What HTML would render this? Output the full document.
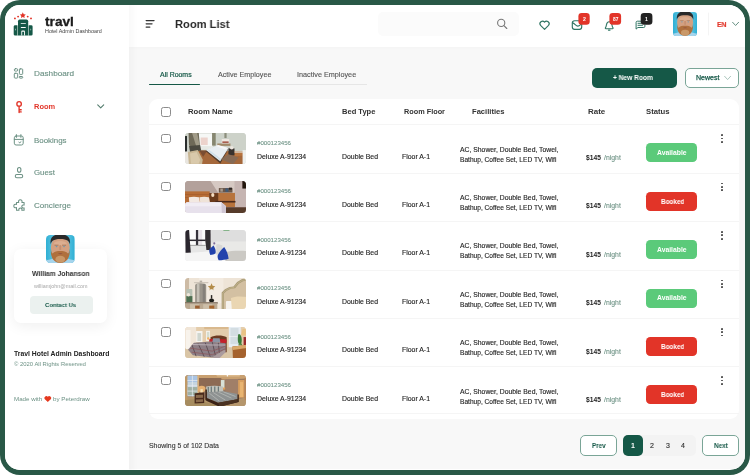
<!DOCTYPE html>
<html lang="en">
<head>
<meta charset="utf-8">
<title>travl - Room List</title>
<style>
*{box-sizing:border-box;margin:0;padding:0}
html,body{width:750px;height:475px;overflow:hidden;background:#fff}
body{font-family:"Liberation Sans",sans-serif;position:relative}
.abs{position:absolute}
.t{position:absolute;white-space:nowrap;font-family:"Liberation Sans",sans-serif;transform-origin:0 50%;will-change:transform}
#frame{position:absolute;left:0;top:0;width:750px;height:475px;border-radius:20px 21.5px 20px 20px;background:#295847}
#page{position:absolute;left:5px;top:4.5px;width:740px;height:465.5px;border-radius:15px 17px 15px 15px;background:#fff;overflow:hidden}
/* coordinates inside #page are offset; use #abs layer in page coords instead */
#layer{position:absolute;left:-5px;top:-4.5px;width:750px;height:475px}
#content{position:absolute;left:129px;top:0;width:621px;height:468.6px;background:#f8f8f8}
#sidebar{position:absolute;left:0;top:0;width:129px;height:475px;background:#fff;box-shadow:3px 0 8px rgba(0,0,0,.035)}
#header{position:absolute;left:129px;top:0;width:621px;height:47.2px;background:#fff;box-shadow:0 1px 4px rgba(0,0,0,.025)}
#search{position:absolute;left:378.1px;top:12.4px;width:140.6px;height:23.3px;border-radius:5px;background:#fbfbfb}
.card{position:absolute;background:#fff;border-radius:8px}
#table{left:149px;top:99.2px;width:590px;height:319.8px;border-radius:9px}
.hr{position:absolute;left:149px;width:590px;height:1px;background:#f5f5f5}
.cb{position:absolute;left:161px;width:9.6px;height:9.4px;border:1.1px solid #8c8c8c;border-radius:2.4px;background:#fff}
.ph{position:absolute;left:185.2px;width:60.6px;height:31.2px;border-radius:3.5px;overflow:hidden}
.ph svg{display:block;width:100%;height:100%}
.st{position:absolute;left:646.2px;width:50.4px;height:19px;border-radius:4.3px}
.st.a{background:#5bca7a}.st.b{background:#e23428}
.dots{position:absolute;left:721.3px;width:1.8px;height:9px}
.dots i{position:absolute;left:0;width:1.75px;height:1.75px;border-radius:50%;background:#4a4a4a}
.btn{position:absolute;border-radius:4px}
.pgb{position:absolute;top:435.3px;height:21.2px;border-radius:5px;border:1px solid #7aa597;background:#fff}
</style>
</head>
<body>
<div id="frame"></div>
<div id="page"><div id="layer">
  <main id="content"></main>
  <header id="header"></header>
  <aside id="sidebar"></aside>
  <div id="search"></div>

  <!-- profile card -->
  <div class="card" style="left:13.9px;top:248.5px;width:92.9px;height:74.5px;border-radius:7px;box-shadow:0 3px 14px rgba(0,0,0,.065)"></div>
  <div class="abs" style="left:29.7px;top:295.6px;width:63.2px;height:18.4px;border-radius:4px;background:#ebf1ef"></div>
  <div class="abs" style="left:46.1px;top:235.2px;width:28.6px;height:28.2px;border-radius:4.2px;overflow:hidden"><svg viewBox="0 0 100 100" preserveAspectRatio="none" width="100%" height="100%"><defs><linearGradient id="avbga" x1="0" x2="1" y1="0" y2="0"><stop offset="0" stop-color="#2eafd4"/><stop offset=".5" stop-color="#86d5ea"/><stop offset="1" stop-color="#2eafd4"/></linearGradient><filter id="avbla" x="-10%" y="-10%" width="120%" height="120%"><feGaussianBlur stdDeviation="2.600"/></filter></defs><rect width="100" height="100" fill="url(#avbga)"/><g filter="url(#avbla)"><path d="M-5 106V92C8 88 20 86 32 82h36c12 4 24 6 37 10v14z" fill="#a5d4ec"/><ellipse cx="50" cy="44" rx="33" ry="41" fill="#d3a081"/><ellipse cx="50" cy="30" rx="22" ry="9" fill="#dcae90"/><path d="M16 33C13 6 28-3 50-3s37 9 34 36c-3-11-9-19-34-19S19 22 16 33z" fill="#2a2a2c"/><path d="M17 50c1 9 3 14 6 16 6-8 16-9 27-9s21 1 27 9c3-2 5-7 6-16 2 26-8 49-33 49S15 76 17 50z" fill="#b0703e"/><ellipse cx="50" cy="86" rx="17" ry="12" fill="#c99868"/><ellipse cx="50" cy="66" rx="7.500" ry="2.200" fill="#965641"/><path d="M30 35h14v2.500H30zM56 35h14v2.500H56z" fill="#9a6a4c"/><circle cx="37" cy="41" r="2.800" fill="#6a9ab5"/><circle cx="63" cy="41" r="2.800" fill="#6a9ab5"/><path d="M47 36v17h6V36z" fill="#c58e6e"/></g></svg></div>
  <div class="abs" style="left:673.3px;top:11.9px;width:24.2px;height:24.0px;border-radius:3.2px;overflow:hidden"><svg viewBox="0 0 100 100" preserveAspectRatio="none" width="100%" height="100%"><defs><linearGradient id="avbgb" x1="0" x2="1" y1="0" y2="0"><stop offset="0" stop-color="#2eafd4"/><stop offset=".5" stop-color="#86d5ea"/><stop offset="1" stop-color="#2eafd4"/></linearGradient><filter id="avblb" x="-10%" y="-10%" width="120%" height="120%"><feGaussianBlur stdDeviation="2.600"/></filter></defs><rect width="100" height="100" fill="url(#avbgb)"/><g filter="url(#avblb)"><path d="M-5 106V92C8 88 20 86 32 82h36c12 4 24 6 37 10v14z" fill="#a5d4ec"/><ellipse cx="50" cy="44" rx="33" ry="41" fill="#d3a081"/><ellipse cx="50" cy="30" rx="22" ry="9" fill="#dcae90"/><path d="M16 33C13 6 28-3 50-3s37 9 34 36c-3-11-9-19-34-19S19 22 16 33z" fill="#2a2a2c"/><path d="M17 50c1 9 3 14 6 16 6-8 16-9 27-9s21 1 27 9c3-2 5-7 6-16 2 26-8 49-33 49S15 76 17 50z" fill="#b0703e"/><ellipse cx="50" cy="86" rx="17" ry="12" fill="#c99868"/><ellipse cx="50" cy="66" rx="7.500" ry="2.200" fill="#965641"/><path d="M30 35h14v2.500H30zM56 35h14v2.500H56z" fill="#9a6a4c"/><circle cx="37" cy="41" r="2.800" fill="#6a9ab5"/><circle cx="63" cy="41" r="2.800" fill="#6a9ab5"/><path d="M47 36v17h6V36z" fill="#c58e6e"/></g></svg></div>

  <!-- tabs -->
  <div class="abs" style="left:149px;top:84px;width:217.5px;height:1px;background:#e6e6e6"></div>
  <div class="abs" style="left:149px;top:83.6px;width:50.8px;height:1.5px;background:#155847;border-radius:1px"></div>

  <!-- buttons -->
  <div class="btn" style="left:592.3px;top:68.1px;width:85px;height:19.8px;background:#155847;border-radius:5px"></div>
  <div class="btn" style="left:685.3px;top:68.1px;width:53.7px;height:19.8px;background:#fff;border:1px solid #7aa597;border-radius:5px"></div>

  <!-- table -->
  <div class="card" id="table"></div>
  <div class="cb" style="top:107.2px"></div>
  <div class="hr" style="top:124.2px"></div>
  <div class="cb" style="top:133.7px"></div>
  <div class="ph" style="top:133.0px"><svg viewBox="0 0 60 31" preserveAspectRatio="none"><defs><filter id="pf0" x="-5%" y="-5%" width="110%" height="110%"><feGaussianBlur stdDeviation="0.75"/></filter></defs><rect width="60" height="31" fill="#cdd2c9"/><g filter="url(#pf0)"><rect x="-2" y="-2" width="64" height="35" fill="#cdd2c9"/><path d="M14 17.500L60 18.300V33H-2V20z" fill="#a5673a"/><path d="M14 17.500l8 0-4 6z" fill="#7a4e30"/><path d="M42 18l15 .5v4l-8 .5z" fill="#b8743f"/><rect x="13.800" y=".500" width="13.500" height="15.500" fill="#f6f8f6"/><rect x="15.500" y="4.500" width="7" height="7.500" fill="#ecd3cc"/><rect x="14" y="13" width="13" height="3.500" fill="#e6e9e4"/><path d="M3.500 -1h10l1.300 13.500-4.300 3-6.500-3z" fill="#6e6958"/><path d="M7 0l5 0 2.500 12.500-3 2z" fill="#a19b88"/><path d="M4 13l11 -1 1 5.500-11 1.500z" fill="#4b4a40"/><rect x="26.800" y="-1" width="3.600" height="13.500" fill="#86866f"/><rect x="39" y="-1" width="2.200" height="6" fill="#8c8e7c"/><rect x="-1" y="3" width="3" height="15.500" fill="#2c2d2d"/><path d="M2.800 19l9.800-2.200 5 9.700-1 6H2.500z" fill="#c9b795"/><path d="M5 20.500l6.500-1.500 3.500 7.500-1.500 4H6z" fill="#d9c9ab"/><path d="M-1 19l3.800-.500L4 33H-1z" fill="#e9e6e0"/><rect x="32" y="10.400" width="13" height="2.400" fill="#a18a6a"/><rect x="36.400" y="6" width="7.400" height="4.400" fill="#efe7e0"/><rect x="37" y="8.300" width="6.200" height="1.800" fill="#a85e50"/><path d="M20.400 18L32 12.600l11 3-8 14.600z" fill="#4e3a2c"/><path d="M20.800 17L32 12.200l11 2.900-8.200 13z" fill="#e8eef2"/><path d="M22.500 17.600l12.500 9.800 1-1.600-12-9z" fill="#cfe0ea"/><path d="M30.500 13l2.500-1 9 2.600-1.500 2z" fill="#f7f7f7"/><rect x="43" y="15.300" width="6" height="7" fill="#39312e"/><ellipse cx="46.300" cy="14.700" rx="1.800" ry="1.700" fill="#ece6de"/><path d="M35.500 26l7.500-4.800 10 3.200-5.500 6.600z" fill="#866b55"/><rect x="57" y="17" width="4" height="16" fill="#eef0ee"/><rect x="49" y="18.300" width="8.500" height="1.200" fill="#e3e0d8"/></g></svg></div>
  <div class="st a" style="top:143.4px"></div>
  <div class="dots" style="top:133.8px"><i style="top:.55px"></i><i style="top:3.9px"></i><i style="top:7.25px"></i></div>
  <div class="hr" style="top:172.8px"></div>
  <div class="cb" style="top:182.1px"></div>
  <div class="ph" style="top:181.4px"><svg viewBox="0 0 60 31" preserveAspectRatio="none"><defs><filter id="pf1" x="-5%" y="-5%" width="110%" height="110%"><feGaussianBlur stdDeviation="0.75"/></filter></defs><rect width="60" height="31" fill="#b3a19b"/><g filter="url(#pf1)"><rect x="-2" y="-2" width="64" height="35" fill="#b3a19b"/><path d="M24 -2h38v14H33z" fill="#d6c9c3"/><rect x="49" y="-2" width="13" height="32" fill="#c6b5b2"/><rect x="-2" y="10.300" width="26.500" height="12" fill="#b66c34"/><rect x="-2" y="13" width="26" height=".5" fill="#9c5626"/><rect x="-2" y="16" width="26" height=".5" fill="#9c5626"/><rect x="24" y="12" width="9.500" height="9" fill="#6b3a1f"/><rect x="33" y="11.800" width="16.500" height="14" fill="#b7733e"/><rect x="30" y="19.800" width="20" height="1.600" fill="#4c2c1c"/><rect x="33.500" y="7" width="13.500" height="4.500" fill="#6a5648"/><rect x="35" y="7.600" width="2.500" height="3" fill="#a89a8c"/><rect x="40" y="7.300" width="3" height="3.400" fill="#3d5a78"/><rect x="43.500" y="6.600" width="3" height="2" fill="#2b2420"/><rect x="56.800" y="-1" width="4" height="8.500" fill="#24140f"/><ellipse cx="27.500" cy="14" rx="1.600" ry="2" fill="#f4dcc0"/><path d="M40 26h22v7H36z" fill="#573a2c"/><path d="M3.800 16.200c3-.8 7-.8 10 0l1 4.600H4.200z" fill="#f3e9e2"/><path d="M14.200 16.200c3-.8 6.500-.8 9.500 0l1 4.800H15z" fill="#efe3d8"/><path d="M1.500 21.200H36l4.500 4V33H-2V24z" fill="#e7e1ec"/><path d="M1.500 21.200H36l4.500 4H0z" fill="#f1edf4"/><path d="M36 21.200l4.500 4V33h-4z" fill="#cfc6d3"/></g></svg></div>
  <div class="st b" style="top:191.8px"></div>
  <div class="dots" style="top:182.2px"><i style="top:.55px"></i><i style="top:3.9px"></i><i style="top:7.25px"></i></div>
  <div class="hr" style="top:221.2px"></div>
  <div class="cb" style="top:230.5px"></div>
  <div class="ph" style="top:229.8px"><svg viewBox="0 0 60 31" preserveAspectRatio="none"><defs><filter id="pf2" x="-5%" y="-5%" width="110%" height="110%"><feGaussianBlur stdDeviation="0.75"/></filter></defs><rect width="60" height="31" fill="#e6e6e6"/><g filter="url(#pf2)"><rect x="-2" y="-2" width="64" height="35" fill="#e6e6e6"/><rect x="26" y="-2" width="36" height="14.500" fill="#dedede"/><rect x="3.500" y="-1" width="17.500" height="16.500" fill="#fbfbfb"/><rect x="14" y="-1" width="3" height="16" fill="#eae4ea"/><rect x="3.500" y="9.500" width="17" height="1.500" fill="#2d2b30"/><rect x="10.800" y="-1" width="2.300" height="16" fill="#35333a"/><rect x="3.500" y="14.800" width="17" height=".8" fill="#8a8a8a"/><path d="M.3 -1H4l.8 12 1 11.500H.6z" fill="#2c282e"/><path d="M20 -1h5.300l.2 21h-4.300L20 10z" fill="#332d33"/><path d="M26 14l5-2.500H62V22H26z" fill="#e9e9e7"/><path d="M-1 23l27-2 8 4 28-3v11H-1z" fill="#f5f5f5"/><path d="M40 22c6-1.500 14-1.800 22-1v12H40z" fill="#cbc9c4"/><path d="M31 14.500c2-.8 4 .2 6 1v9h-6z" fill="#d8d8d6"/><rect x="38" y="-1" width="6" height="1.600" fill="#4c9a54"/><circle cx="29" cy="13.300" r="1" fill="#7b6a9a"/><path d="M28.300 15.300c-1.500 1.300-3.300 2.800-4.200 4.100-.4 1.700.3 4 1 5.400 1.800-.6 4-.6 5.200-1.800.5-2.500-.5-5.300-2-7.700z" fill="#2243ac"/><path d="M38.800 16.900c-2.400 2.300-5 5-6.400 8.200-.4 1.700.2 3.600 1 5 3.300-.2 7-.6 9.800-1.600-.4-4-2-8.200-4.400-11.600z" fill="#2243ac"/></g></svg></div>
  <div class="st a" style="top:240.2px"></div>
  <div class="dots" style="top:230.6px"><i style="top:.55px"></i><i style="top:3.9px"></i><i style="top:7.25px"></i></div>
  <div class="hr" style="top:269.6px"></div>
  <div class="cb" style="top:278.9px"></div>
  <div class="ph" style="top:278.2px"><svg viewBox="0 0 60 31" preserveAspectRatio="none"><defs><filter id="pf3" x="-5%" y="-5%" width="110%" height="110%"><feGaussianBlur stdDeviation="0.7"/></filter></defs><rect width="60" height="31" fill="#eee4d7"/><g filter="url(#pf3)"><rect x="-2" y="-2" width="64" height="35" fill="#eee4d7"/><rect x="-2" y="-2" width="6" height="27" fill="#cdbba5"/><rect x="14" y="-2" width="24" height="27" fill="#f3ebe1"/><path d="M36.300 33V14.500l3.200-3.200 4.500-2.300 4-.6 3.600-4.300L56.500 1 62 .2V33z" fill="#a99b78"/><path d="M38.500 33V15.400l2.600-2.600 4.200-2 4.300-.7 3.700-4.400 4.200-2.400L62 2.600V33z" fill="#d3c0a2"/><path d="M37.400 33V15l2.900-2.900 4.300-2.100 4.100-.6 3.700-4.400 4.400-2.700L62 1.500" fill="none" stroke="#c9b98f" stroke-width=".7"/><rect x="8.800" y="3.900" width="14.500" height="1.200" rx=".6" fill="#cfc6ba"/><rect x="14.500" y="2.600" width="2.500" height="1.800" fill="#b5aea3"/><path d="M10 7.500c0-1.600 2-2.400 5.500-2.400s5.500.8 5.500 2.400V24H10z" fill="#9b958b"/><rect x="11.800" y="6" width="2.500" height="18" fill="#c5c0b6"/><rect x="17.500" y="6" width="2.500" height="18" fill="#85807a"/><rect x="1.300" y="11" width="6" height="13.300" rx="1" fill="#b8c1b4"/><rect x="1.300" y="18" width="6" height="6.300" fill="#4e6e50"/><circle cx="3.400" cy="16.600" r="1.700" fill="#efe6da"/><path d="M26.300 5.300l1 2.500 2.700.3-2 1.800.6 2.700-2.300-1.400-2.300 1.400.6-2.700-2-1.800 2.700-.3z" fill="#b38b48"/><path d="M24 11.500h4.600l-.8 7.500h-3z" fill="#f1ebe2"/><rect x="25.600" y="17" width="1.400" height="3.500" fill="#2a2522"/><ellipse cx="26.300" cy="22.300" rx="2.500" ry="1.900" fill="#1e1a18"/><rect x="-1" y="24" width="33.500" height="1.500" fill="#7f6f5e"/><rect x="-1" y="25.500" width="33" height="7" fill="#bba991"/><rect x="5" y="26" width="9" height="5.500" fill="#cdbfa9"/><rect x="18" y="26" width="9" height="5.500" fill="#cdbfa9"/><rect x="10" y="27.400" width="4.500" height="3" fill="#9a5e30"/><rect x="24" y="27.400" width="5" height="3" fill="#a5652f"/><rect x="40.500" y="22.800" width="7" height="9" rx="1" fill="#f6f3ee"/><path d="M45.500 20c3-1.800 10-2 16.500-1v14H46.500z" fill="#ead6b2"/></g></svg></div>
  <div class="st a" style="top:288.6px"></div>
  <div class="dots" style="top:279.0px"><i style="top:.55px"></i><i style="top:3.9px"></i><i style="top:7.25px"></i></div>
  <div class="hr" style="top:318.0px"></div>
  <div class="cb" style="top:327.3px"></div>
  <div class="ph" style="top:326.6px"><svg viewBox="0 0 60 31" preserveAspectRatio="none"><defs><filter id="pf4" x="-5%" y="-5%" width="110%" height="110%"><feGaussianBlur stdDeviation="0.75"/></filter></defs><rect width="60" height="31" fill="#e4cdac"/><g filter="url(#pf4)"><rect x="-2" y="-2" width="64" height="35" fill="#e4cdac"/><rect x="-2" y="-2" width="13" height="30" fill="#f1e6d8"/><rect x="19" y="-2" width="24" height="4" fill="#d9b98e"/><path d="M-2 22l10-3 34 1 20 4v9H-2z" fill="#d9c5a6"/><rect x="1" y="3" width="4.500" height="19" fill="#f8f3ec"/><rect x="11" y="4" width="6.300" height="11" fill="#f6f4f0"/><rect x="12.300" y="6" width="3.600" height="8" fill="#cfd6cf"/><rect x="20.800" y="3.800" width="4" height="10" fill="#f4f1ea"/><rect x="21.700" y="5" width="2.300" height="6" fill="#d5dccf"/><circle cx="23" cy="11.500" r="1.200" fill="#f0b060"/><rect x="43.400" y="-1" width="11.800" height="21" fill="#e6edf3"/><rect x="45" y="1" width="8" height="16" fill="#d3dde2"/><rect x="43.400" y="9" width="11.800" height=".6" fill="#f8f8f8"/><path d="M25.300 10.300c2-1.300 5-1.800 8-1.800s6 .5 8 1.800V25h-2.500V15H25.300z" fill="#6c3b22"/><rect x="24" y="12" width="4.500" height="3.300" rx=".8" fill="#c2202b"/><rect x="34" y="12.200" width="7.200" height="3.600" rx=".8" fill="#c2202b"/><path d="M27.800 11.300h6.500l.7 3.900h-8z" fill="#8b94a4"/><path d="M27 30.300l13.200-8.200v3L33 32z" fill="#aa9b9e"/><path d="M8.800 15.600l16.500-1.200 15 1.700v6L27 30.300 7.800 28 3 22.500z" fill="#8d7f86"/><path d="M7 18l4 11M13 16.500l6 13M20 15.500l5 14M27 15l3 13M33 15.500l1 10" stroke="#54454c" stroke-width=".800" fill="none"/><path d="M5 21l22 3 13-5M6.500 25l20.500 2.600 13-6" stroke="#8b5558" stroke-width=".700" fill="none"/><path d="M7.500 17.500l19 .5 13.500 0" stroke="#b9aeb4" stroke-width="1" fill="none"/><path d="M53.500 7c1.500 0 2.700 3 2.700 6s-.6 4.300-1.600 4.300-2.300-1-2.300-4.800S52.500 7 53.500 7z" fill="#3b7d3a"/><rect x="53" y="16.500" width="3.500" height="1.800" fill="#5a8a4a"/><path d="M55.500 8.500l1.500-6.500h4.500v6.500z" fill="#e9c385"/><rect x="58" y="10" width="3" height="8" fill="#9a2a2a"/><path d="M47 19.500l14-1.500v15H47.500z" fill="#a5622d"/><path d="M46.600 19.600L61 17.600v3.200l-13.500 2z" fill="#d9a96b"/></g></svg></div>
  <div class="st b" style="top:337.0px"></div>
  <div class="dots" style="top:327.4px"><i style="top:.55px"></i><i style="top:3.9px"></i><i style="top:7.25px"></i></div>
  <div class="hr" style="top:366.4px"></div>
  <div class="cb" style="top:375.7px"></div>
  <div class="ph" style="top:375.0px"><svg viewBox="0 0 60 31" preserveAspectRatio="none"><defs><filter id="pf5" x="-5%" y="-5%" width="110%" height="110%"><feGaussianBlur stdDeviation="0.75"/></filter></defs><rect width="60" height="31" fill="#99785f"/><g filter="url(#pf5)"><rect x="-2" y="-2" width="64" height="35" fill="#99785f"/><path d="M13 -2h49V3.500L40 4.500 14 3z" fill="#c9a070"/><path d="M30 -1h25l-1 2.500H32z" fill="#dcb98c"/><circle cx="42" cy=".8" r=".8" fill="#fff"/><rect x="13" y="3" width="23" height="12.500" fill="#8d6b53"/><rect x="40" y="4" width="12.500" height="15" fill="#a07f68"/><path d="M-2 22l14-1 21 6 29-5v11H-2z" fill="#b5966c"/><path d="M-2 25l12-1 20 5.500L32 33H-2z" fill="#a68c5e"/><rect x="-1" y="-1" width="3.500" height="26" fill="#c09a68"/><rect x="2.400" y=".4" width="10.200" height="20.800" fill="#c6d5e0"/><rect x="3" y="12" width="9" height="8" fill="#9fb0a4"/><rect x="3" y="1" width="9" height="6" fill="#a9c4e4"/><path d="M7.300 .4v20.800M2.400 5.500h10.200M2.400 10.800h10.200M2.400 16h10.200" stroke="#e9eef2" stroke-width=".7" fill="none"/><rect x="12.400" y="0" width="1.400" height="22" fill="#d9b27c"/><ellipse cx="16.500" cy="14" rx="3.800" ry="3.300" fill="#e7b172"/><rect x="15.300" y="14" width="2.300" height="3.300" fill="#f6e1b4"/><rect x="35.500" y="5" width="3.600" height="8.300" fill="#d9e2d8"/><rect x="34.800" y="12.500" width="5" height="2" fill="#e2a25a"/><rect x="52.600" y="5" width="6.400" height="17.500" fill="#d9a05f"/><rect x="54.500" y="7" width="3" height="15" fill="#e9b572"/><rect x="59" y="3" width="3" height="22" fill="#b58458"/><path d="M21 11.500c5-1 11-1 16.500 0l.5 5.500-17 .5z" fill="#c3c3bb"/><path d="M23 12v5M26 11.500v5.500M29.500 11.500v5.500M33 11.500v5.500" stroke="#5f6f70" stroke-width="1.100" fill="none"/><path d="M21.500 17.200l16.500-1 14 2.800v5L33 27.500 21 22.500z" fill="#8e9292"/><path d="M24 18l10 8M28 17.500l12 7.500M33 17l13 6M38 16.800l12 4.500" stroke="#bcbfbb" stroke-width=".700" fill="none"/><path d="M21 22.500l12 5 19-3.500v-4.500l1.300-.2v7.500L34 31.500l-13-6z" fill="#3a2418"/><path d="M33 27.500l19-3.500v3L34 31.500z" fill="#4b3122"/><path d="M20.200 14.500h1.500V25h-1.500z" fill="#3a2418"/><path d="M9.500 18.200l9.500-.7v10.300l-9.500.5z" fill="#4a2c1c"/><path d="M10.800 20l7-.4v3l-7 .3zM10.800 24.300l7-.3v2.600l-7 .4z" fill="#8a6a4c"/></g></svg></div>
  <div class="st b" style="top:385.4px"></div>
  <div class="dots" style="top:375.8px"><i style="top:.55px"></i><i style="top:3.9px"></i><i style="top:7.25px"></i></div>
  <div class="hr" style="top:413.0px"></div>

  <!-- pagination -->
  <div class="pgb" style="left:580.1px;width:36.6px"></div>
  <div class="abs" style="left:622.5px;top:435.3px;width:73.5px;height:21.2px;border-radius:5px;background:#f3f3f3"></div>
  <div class="abs" style="left:622.5px;top:435.3px;width:20.8px;height:21.2px;border-radius:5px;background:#155847"></div>
  <div class="pgb" style="left:702.3px;width:36.5px"></div>

  <!-- ICONS: one page-sized svg overlay, coordinates = page pixels -->
<svg class="abs" style="left:0;top:0" width="750" height="475" viewBox="0 0 750 475" fill="none" stroke-linecap="round" stroke-linejoin="round">
  <!-- logo -->
  <g stroke="none">
    <path d="M18 21.2a1.7 1.7 0 0 1 1.7-1.7h6.8a1.7 1.7 0 0 1 1.7 1.7V35.6H18z" fill="#155847"/>
    <path d="M13.7 26.6a1.4 1.4 0 0 1 1.4-1.4h2V35.6h-2a1.4 1.4 0 0 1-1.4-1.4z" fill="#155847"/>
    <path d="M29 25.2h2.2a1.4 1.4 0 0 1 1.4 1.4v7.6a1.4 1.4 0 0 1-1.4 1.4H29z" fill="#155847"/>
    <rect x="17.1" y="25.4" width="0.9" height="10.2" fill="#7fa699"/>
    <rect x="28.2" y="25.4" width="0.8" height="10.2" fill="#7fa699"/>
    <rect x="20.7" y="23.2" width="5.2" height="0.9" rx=".4" fill="#fff"/>
    <rect x="20.7" y="27.1" width="5.2" height="0.9" rx=".4" fill="#fff"/>
    <path d="M21.3 35.6v-4.2a.8.8 0 0 1 .8-.8h2a.8.8 0 0 1 .8.8v4.2h-.9v-3.9h-1.8v3.9z" fill="#fff"/>
    <rect x="15.2" y="28.6" width="0.6" height="1.8" rx=".3" fill="#cfe0da"/>
    <rect x="30.5" y="28.6" width="0.6" height="1.8" rx=".3" fill="#cfe0da"/>
    <path d="M22.8 12.3l.9 1.9 2.1.3-1.5 1.5.35 2.1-1.85-1-1.85 1 .35-2.1-1.5-1.5 2.1-.3z" fill="#e23428"/>
    <circle cx="18.1" cy="16.6" r=".95" fill="#e23428"/><circle cx="14.9" cy="18.4" r=".95" fill="#e23428"/>
    <circle cx="27.7" cy="16.6" r=".95" fill="#e23428"/><circle cx="31" cy="18.4" r=".95" fill="#e23428"/>
  </g>
  <!-- sidebar: dashboard -->
  <g stroke="#6c9184" stroke-width="1">
    <rect x="14.300" y="68.700" width="3.400" height="2.400" rx="1.100"/>
    <rect x="19.4" y="68.9" width="3.3" height="5.5" rx=".8"/>
    <rect x="14.3" y="73.3" width="3.4" height="4.8" rx=".8"/>
    <rect x="19.4" y="76.5" width="3.3" height="1.6" rx=".6"/>
  </g>
  <!-- key -->
  <g stroke="#e23428" stroke-width="1.35">
    <circle cx="19.1" cy="103.9" r="2.25"/>
    <path d="M19.1 106.3v6.2M19.1 109.7h2.1M19.1 111.9h2.1"/>
  </g>
  <!-- calendar -->
  <g stroke="#6c9184" stroke-width="1">
    <rect x="14.3" y="136" width="8.9" height="9" rx="1.8"/>
    <path d="M14.3 139.4h8.9M16.4 134.6v2.8M20.9 134.6v2.8M18.9 142.2l.9.6 1.2-1.1"/>
  </g>
  <!-- guest -->
  <g stroke="#6c9184" stroke-width="1.05">
    <ellipse cx="19.2" cy="169.9" rx="1.75" ry="2.3"/>
    <rect x="15.3" y="174.5" width="7.4" height="3.2" rx="1.5"/>
  </g>
  <!-- concierge / puzzle -->
  <path stroke="#6c9184" stroke-width="1.050" d="M16.500 202.400H18.700c-.600-1.500.300-2.700 1.600-2.700s2.200 1.200 1.600 2.700H24.100V205.100c-1.300-.500-2.300.300-2.300 1.400s1 1.900 2.300 1.400V210.300H21.800c.500-1.300-.300-2.300-1.400-2.300s-1.900 1-1.400 2.300H16.500V207.600c-1.500.600-2.700-.300-2.700-1.600s1.200-2.200 2.700-1.600z"/>
  <!-- room chevron -->
  <path stroke="#547d6e" stroke-width="1.100" d="M97.700 104.800l3 3 3-3"/>
  <!-- heart (made with) -->
  <path stroke="none" fill="#e5391f" d="M47.800 402.100l-3.200-3.100a1.950 1.950 0 0 1 3.200-2.200a1.950 1.950 0 0 1 3.200 2.200z"/>

  <!-- hamburger -->
  <g stroke="#333" stroke-width="1.400" stroke-linecap="round">
    <path d="M146.200 20.600h7.800M146.200 23.850h5.800M146.200 27.100h3.600"/>
  </g>
  <!-- search -->
  <g stroke="#777" stroke-width="1.100">
    <circle cx="501.200" cy="22.900" r="3.600"/><path d="M503.900 25.600l2.900 2.900"/>
  </g>
  <!-- header heart -->
  <path stroke="#2f7563" stroke-width="1.15" d="M544.550 29.300l-4-3.900a2.550 2.550 0 0 1 4-3.200a2.550 2.550 0 0 1 4 3.200z"/>
  <!-- mail -->
  <g stroke="#2f7563" stroke-width="1.150">
    <rect x="572.300" y="20.700" width="9.400" height="8.600" rx="2.300"/>
    <path d="M572.500 22.900c2.300.4 3.300 3.200 5.300 3.200s2.700-1.700 3.800-2.300"/>
  </g>
  <!-- bell -->
  <g stroke="#2f7563" stroke-width="1.100">
    <path d="M605.900 28.800c-.6 0-.8-.7-.4-1.200.8-.9.7-2 1-3.100.4-1.700 1.400-2.700 2.700-2.700s2.300 1 2.700 2.700c.3 1.100.2 2.200 1 3.100.4.5.2 1.200-.4 1.200z"/>
    <path d="M608.400 30.100h1.600"/>
  </g>
  <!-- chat -->
  <g stroke="#2f7563" stroke-width="1">
    <path d="M641.500 21.200h-4.200a1.200 1.200 0 0 0-1.200 1.200v6.700l1.800-1.600h5.800a1.200 1.200 0 0 0 1.200-1.200v-1"/>
    <path d="M638 23.300h3M638 25.300h4.500"/>
  </g>
  <!-- badges -->
  <g stroke="none">
    <rect x="578.400" y="13.100" width="11.300" height="11.700" rx="3.300" fill="#e23428"/>
    <rect x="609.400" y="13.100" width="11.700" height="11.700" rx="3.300" fill="#e23428"/>
    <rect x="640.700" y="13.100" width="11.700" height="11.700" rx="3.300" fill="#222"/>
  </g>
  <!-- divider + chevron -->
  <path stroke="#f4f4f4" stroke-width="1" d="M708.500 13v22"/>
  <path stroke="#5f8a7c" stroke-width=".95" d="M732.600 22.300l3 3.200 3-3.200"/>
  <!-- newest chevron -->
  <path stroke="#a3c0b6" stroke-width=".9" d="M724.600 76.300l3 3.300 3-3.300"/>
</svg>

  <span class="t" style="left:45.2px;top:13px;font-size:12.8px;line-height:17px;font-weight:700;color:#1d1d1d;transform:scaleX(1.069);-webkit-text-stroke:0.3px #1d1d1d;">travl</span>
<span class="t" style="left:45.0px;top:27px;font-size:5.1px;line-height:8px;font-weight:400;color:#444;transform:scaleX(1.056);">Hotel Admin Dashboard</span>
<span class="t" style="left:34.0px;top:68px;font-size:7.5px;line-height:11px;font-weight:400;color:#6c9184;transform:scaleX(1.093);-webkit-text-stroke:0.12px #6c9184;">Dashboard</span>
<span class="t" style="left:34.0px;top:101px;font-size:7.5px;line-height:11px;font-weight:700;color:#e23428;transform:scaleX(0.993);">Room</span>
<span class="t" style="left:34.0px;top:135px;font-size:7.5px;line-height:11px;font-weight:400;color:#6c9184;transform:scaleX(1.056);-webkit-text-stroke:0.12px #6c9184;">Bookings</span>
<span class="t" style="left:34.0px;top:167px;font-size:7.5px;line-height:11px;font-weight:400;color:#6c9184;transform:scaleX(1.039);-webkit-text-stroke:0.12px #6c9184;">Guest</span>
<span class="t" style="left:34.0px;top:200px;font-size:7.5px;line-height:11px;font-weight:400;color:#6c9184;transform:scaleX(1.079);-webkit-text-stroke:0.12px #6c9184;">Concierge</span>
<span class="t" style="left:31.5px;top:269px;font-size:7.0px;line-height:9px;font-weight:700;color:#333;transform:scaleX(0.969);">William Johanson</span>
<span class="t" style="left:33.6px;top:282px;font-size:5.2px;line-height:8px;font-weight:400;color:#a6a6a6;transform:scaleX(1.039);">williamjohn@mail.com</span>
<span class="t" style="left:44.9px;top:300px;font-size:6.1px;line-height:9px;font-weight:700;color:#155847;transform:scaleX(0.967);">Contact Us</span>
<span class="t" style="left:13.9px;top:349px;font-size:6.7px;line-height:9px;font-weight:700;color:#222;transform:scaleX(1.021);">Travl Hotel Admin Dashboard</span>
<span class="t" style="left:13.9px;top:360px;font-size:5.9px;line-height:8px;font-weight:400;color:#6c9184;transform:scaleX(0.997);">© 2020 All Rights Reserved</span>
<span class="t" style="left:13.9px;top:395px;font-size:5.9px;line-height:8px;font-weight:400;color:#6c9184;transform:scaleX(1.050);">Made with</span>
<span class="t" style="left:53.2px;top:395px;font-size:5.9px;line-height:8px;font-weight:400;color:#6c9184;transform:scaleX(1.060);">by Peterdraw</span>
<span class="t" style="left:174.5px;top:17px;font-size:11.2px;line-height:14px;font-weight:700;color:#2a2a2a;transform:scaleX(0.994);">Room List</span>
<span class="t" style="left:582.7px;top:15px;font-size:5.2px;line-height:8px;font-weight:700;color:#fff;">2</span>
<span class="t" style="left:612.6px;top:16px;font-size:4.9px;line-height:7px;font-weight:700;color:#fff;">87</span>
<span class="t" style="left:645.0px;top:15px;font-size:5.2px;line-height:8px;font-weight:700;color:#fff;">1</span>
<span class="t" style="left:717.0px;top:19px;font-size:7.7px;line-height:11px;font-weight:700;color:#e23428;letter-spacing:-0.233px;transform:scaleX(0.900);-webkit-text-stroke:0.15px #e23428;">EN</span>
<span class="t" style="left:160.2px;top:70px;font-size:6.5px;line-height:9px;font-weight:400;color:#155847;transform:scaleX(1.067);-webkit-text-stroke:0.2px #155847;">All Rooms</span>
<span class="t" style="left:217.8px;top:70px;font-size:6.5px;line-height:9px;font-weight:400;color:#555;transform:scaleX(1.103);-webkit-text-stroke:0.1px #555;">Active Employee</span>
<span class="t" style="left:296.8px;top:70px;font-size:6.5px;line-height:9px;font-weight:400;color:#555;transform:scaleX(1.114);-webkit-text-stroke:0.1px #555;">Inactive Employee</span>
<span class="t" style="left:613.4px;top:73px;font-size:7.0px;line-height:9px;font-weight:700;color:#fff;transform:scaleX(0.945);">+ New Room</span>
<span class="t" style="left:695.5px;top:73px;font-size:6.8px;line-height:9px;font-weight:400;color:#155847;transform:scaleX(1.037);-webkit-text-stroke:0.25px #155847;">Newest</span>
<span class="t" style="left:188.0px;top:106px;font-size:7.3px;line-height:11px;font-weight:700;color:#333;transform:scaleX(1.052);">Room Name</span>
<span class="t" style="left:341.6px;top:106px;font-size:7.3px;line-height:11px;font-weight:700;color:#333;transform:scaleX(1.034);">Bed Type</span>
<span class="t" style="left:403.7px;top:106px;font-size:7.3px;line-height:11px;font-weight:700;color:#333;">Room Floor</span>
<span class="t" style="left:472.3px;top:106px;font-size:7.3px;line-height:11px;font-weight:700;color:#333;transform:scaleX(1.041);">Facilities</span>
<span class="t" style="left:587.7px;top:106px;font-size:7.3px;line-height:11px;font-weight:700;color:#333;transform:scaleX(1.093);">Rate</span>
<span class="t" style="left:646.0px;top:106px;font-size:7.3px;line-height:11px;font-weight:700;color:#333;transform:scaleX(1.058);">Status</span>
<span class="t" style="left:256.8px;top:139px;font-size:5.7px;line-height:8px;font-weight:400;color:#6a9082;transform:scaleX(1.075);-webkit-text-stroke:0.06px #6a9082;">#000123456</span>
<span class="t" style="left:256.8px;top:152px;font-size:6.4px;line-height:9px;font-weight:400;color:#222;transform:scaleX(1.082);-webkit-text-stroke:0.12px #222;">Deluxe A-91234</span>
<span class="t" style="left:342.0px;top:152px;font-size:6.4px;line-height:9px;font-weight:400;color:#222;transform:scaleX(1.078);-webkit-text-stroke:0.12px #222;">Double Bed</span>
<span class="t" style="left:402.0px;top:152px;font-size:6.4px;line-height:9px;font-weight:400;color:#222;transform:scaleX(1.080);-webkit-text-stroke:0.12px #222;">Floor A-1</span>
<span class="t" style="left:459.8px;top:145px;font-size:6.4px;line-height:9px;font-weight:400;color:#222;transform:scaleX(1.067);-webkit-text-stroke:0.12px #222;">AC, Shower, Double Bed, Towel,</span>
<span class="t" style="left:459.8px;top:155px;font-size:6.4px;line-height:9px;font-weight:400;color:#222;transform:scaleX(1.033);-webkit-text-stroke:0.12px #222;">Bathup, Coffee Set, LED TV, Wifi</span>
<span class="t" style="left:586.2px;top:153px;font-size:6.7px;line-height:9px;font-weight:700;color:#222;transform:scaleX(0.994);">$145</span>
<span class="t" style="left:604.2px;top:153px;font-size:6.5px;line-height:9px;font-weight:400;color:#6c9184;transform:scaleX(1.056);-webkit-text-stroke:0.1px #6c9184;">/night</span>
<span class="t" style="left:657.3px;top:148px;font-size:6.8px;line-height:9px;font-weight:700;color:#fff;">Available</span>
<span class="t" style="left:256.8px;top:187px;font-size:5.7px;line-height:8px;font-weight:400;color:#6a9082;transform:scaleX(1.075);-webkit-text-stroke:0.06px #6a9082;">#000123456</span>
<span class="t" style="left:256.8px;top:200px;font-size:6.4px;line-height:9px;font-weight:400;color:#222;transform:scaleX(1.082);-webkit-text-stroke:0.12px #222;">Deluxe A-91234</span>
<span class="t" style="left:342.0px;top:200px;font-size:6.4px;line-height:9px;font-weight:400;color:#222;transform:scaleX(1.078);-webkit-text-stroke:0.12px #222;">Double Bed</span>
<span class="t" style="left:402.0px;top:200px;font-size:6.4px;line-height:9px;font-weight:400;color:#222;transform:scaleX(1.080);-webkit-text-stroke:0.12px #222;">Floor A-1</span>
<span class="t" style="left:459.8px;top:193px;font-size:6.4px;line-height:9px;font-weight:400;color:#222;transform:scaleX(1.067);-webkit-text-stroke:0.12px #222;">AC, Shower, Double Bed, Towel,</span>
<span class="t" style="left:459.8px;top:203px;font-size:6.4px;line-height:9px;font-weight:400;color:#222;transform:scaleX(1.033);-webkit-text-stroke:0.12px #222;">Bathup, Coffee Set, LED TV, Wifi</span>
<span class="t" style="left:586.2px;top:201px;font-size:6.7px;line-height:9px;font-weight:700;color:#222;transform:scaleX(0.994);">$145</span>
<span class="t" style="left:604.2px;top:201px;font-size:6.5px;line-height:9px;font-weight:400;color:#6c9184;transform:scaleX(1.056);-webkit-text-stroke:0.1px #6c9184;">/night</span>
<span class="t" style="left:660.6px;top:197px;font-size:6.8px;line-height:9px;font-weight:700;color:#fff;transform:scaleX(0.938);">Booked</span>
<span class="t" style="left:256.8px;top:236px;font-size:5.7px;line-height:8px;font-weight:400;color:#6a9082;transform:scaleX(1.075);-webkit-text-stroke:0.06px #6a9082;">#000123456</span>
<span class="t" style="left:256.8px;top:248px;font-size:6.4px;line-height:9px;font-weight:400;color:#222;transform:scaleX(1.082);-webkit-text-stroke:0.12px #222;">Deluxe A-91234</span>
<span class="t" style="left:342.0px;top:248px;font-size:6.4px;line-height:9px;font-weight:400;color:#222;transform:scaleX(1.078);-webkit-text-stroke:0.12px #222;">Double Bed</span>
<span class="t" style="left:402.0px;top:248px;font-size:6.4px;line-height:9px;font-weight:400;color:#222;transform:scaleX(1.080);-webkit-text-stroke:0.12px #222;">Floor A-1</span>
<span class="t" style="left:459.8px;top:241px;font-size:6.4px;line-height:9px;font-weight:400;color:#222;transform:scaleX(1.067);-webkit-text-stroke:0.12px #222;">AC, Shower, Double Bed, Towel,</span>
<span class="t" style="left:459.8px;top:251px;font-size:6.4px;line-height:9px;font-weight:400;color:#222;transform:scaleX(1.033);-webkit-text-stroke:0.12px #222;">Bathup, Coffee Set, LED TV, Wifi</span>
<span class="t" style="left:586.2px;top:250px;font-size:6.7px;line-height:9px;font-weight:700;color:#222;transform:scaleX(0.994);">$145</span>
<span class="t" style="left:604.2px;top:250px;font-size:6.5px;line-height:9px;font-weight:400;color:#6c9184;transform:scaleX(1.056);-webkit-text-stroke:0.1px #6c9184;">/night</span>
<span class="t" style="left:657.3px;top:245px;font-size:6.8px;line-height:9px;font-weight:700;color:#fff;">Available</span>
<span class="t" style="left:256.8px;top:284px;font-size:5.7px;line-height:8px;font-weight:400;color:#6a9082;transform:scaleX(1.075);-webkit-text-stroke:0.06px #6a9082;">#000123456</span>
<span class="t" style="left:256.8px;top:297px;font-size:6.4px;line-height:9px;font-weight:400;color:#222;transform:scaleX(1.082);-webkit-text-stroke:0.12px #222;">Deluxe A-91234</span>
<span class="t" style="left:342.0px;top:297px;font-size:6.4px;line-height:9px;font-weight:400;color:#222;transform:scaleX(1.078);-webkit-text-stroke:0.12px #222;">Double Bed</span>
<span class="t" style="left:402.0px;top:297px;font-size:6.4px;line-height:9px;font-weight:400;color:#222;transform:scaleX(1.080);-webkit-text-stroke:0.12px #222;">Floor A-1</span>
<span class="t" style="left:459.8px;top:290px;font-size:6.4px;line-height:9px;font-weight:400;color:#222;transform:scaleX(1.067);-webkit-text-stroke:0.12px #222;">AC, Shower, Double Bed, Towel,</span>
<span class="t" style="left:459.8px;top:300px;font-size:6.4px;line-height:9px;font-weight:400;color:#222;transform:scaleX(1.033);-webkit-text-stroke:0.12px #222;">Bathup, Coffee Set, LED TV, Wifi</span>
<span class="t" style="left:586.2px;top:298px;font-size:6.7px;line-height:9px;font-weight:700;color:#222;transform:scaleX(0.994);">$145</span>
<span class="t" style="left:604.2px;top:298px;font-size:6.5px;line-height:9px;font-weight:400;color:#6c9184;transform:scaleX(1.056);-webkit-text-stroke:0.1px #6c9184;">/night</span>
<span class="t" style="left:657.3px;top:293px;font-size:6.8px;line-height:9px;font-weight:700;color:#fff;">Available</span>
<span class="t" style="left:256.8px;top:333px;font-size:5.7px;line-height:8px;font-weight:400;color:#6a9082;transform:scaleX(1.075);-webkit-text-stroke:0.06px #6a9082;">#000123456</span>
<span class="t" style="left:256.8px;top:345px;font-size:6.4px;line-height:9px;font-weight:400;color:#222;transform:scaleX(1.082);-webkit-text-stroke:0.12px #222;">Deluxe A-91234</span>
<span class="t" style="left:342.0px;top:345px;font-size:6.4px;line-height:9px;font-weight:400;color:#222;transform:scaleX(1.078);-webkit-text-stroke:0.12px #222;">Double Bed</span>
<span class="t" style="left:402.0px;top:345px;font-size:6.4px;line-height:9px;font-weight:400;color:#222;transform:scaleX(1.080);-webkit-text-stroke:0.12px #222;">Floor A-1</span>
<span class="t" style="left:459.8px;top:338px;font-size:6.4px;line-height:9px;font-weight:400;color:#222;transform:scaleX(1.067);-webkit-text-stroke:0.12px #222;">AC, Shower, Double Bed, Towel,</span>
<span class="t" style="left:459.8px;top:348px;font-size:6.4px;line-height:9px;font-weight:400;color:#222;transform:scaleX(1.033);-webkit-text-stroke:0.12px #222;">Bathup, Coffee Set, LED TV, Wifi</span>
<span class="t" style="left:586.2px;top:347px;font-size:6.7px;line-height:9px;font-weight:700;color:#222;transform:scaleX(0.994);">$145</span>
<span class="t" style="left:604.2px;top:347px;font-size:6.5px;line-height:9px;font-weight:400;color:#6c9184;transform:scaleX(1.056);-webkit-text-stroke:0.1px #6c9184;">/night</span>
<span class="t" style="left:660.6px;top:342px;font-size:6.8px;line-height:9px;font-weight:700;color:#fff;transform:scaleX(0.938);">Booked</span>
<span class="t" style="left:256.8px;top:381px;font-size:5.7px;line-height:8px;font-weight:400;color:#6a9082;transform:scaleX(1.075);-webkit-text-stroke:0.06px #6a9082;">#000123456</span>
<span class="t" style="left:256.8px;top:394px;font-size:6.4px;line-height:9px;font-weight:400;color:#222;transform:scaleX(1.082);-webkit-text-stroke:0.12px #222;">Deluxe A-91234</span>
<span class="t" style="left:342.0px;top:394px;font-size:6.4px;line-height:9px;font-weight:400;color:#222;transform:scaleX(1.078);-webkit-text-stroke:0.12px #222;">Double Bed</span>
<span class="t" style="left:402.0px;top:394px;font-size:6.4px;line-height:9px;font-weight:400;color:#222;transform:scaleX(1.080);-webkit-text-stroke:0.12px #222;">Floor A-1</span>
<span class="t" style="left:459.8px;top:387px;font-size:6.4px;line-height:9px;font-weight:400;color:#222;transform:scaleX(1.067);-webkit-text-stroke:0.12px #222;">AC, Shower, Double Bed, Towel,</span>
<span class="t" style="left:459.8px;top:397px;font-size:6.4px;line-height:9px;font-weight:400;color:#222;transform:scaleX(1.033);-webkit-text-stroke:0.12px #222;">Bathup, Coffee Set, LED TV, Wifi</span>
<span class="t" style="left:586.2px;top:395px;font-size:6.7px;line-height:9px;font-weight:700;color:#222;transform:scaleX(0.994);">$145</span>
<span class="t" style="left:604.2px;top:395px;font-size:6.5px;line-height:9px;font-weight:400;color:#6c9184;transform:scaleX(1.056);-webkit-text-stroke:0.1px #6c9184;">/night</span>
<span class="t" style="left:660.6px;top:390px;font-size:6.8px;line-height:9px;font-weight:700;color:#fff;transform:scaleX(0.938);">Booked</span>
<span class="t" style="left:148.8px;top:441px;font-size:6.4px;line-height:9px;font-weight:400;color:#333;transform:scaleX(1.082);-webkit-text-stroke:0.1px #333;">Showing 5 of 102 Data</span>
<span class="t" style="left:591.6px;top:441px;font-size:6.8px;line-height:9px;font-weight:700;color:#155847;transform:scaleX(0.922);">Prev</span>
<span class="t" style="left:631.2px;top:441px;font-size:7.0px;line-height:9px;font-weight:700;color:#fff;">1</span>
<span class="t" style="left:650.2px;top:441px;font-size:7.0px;line-height:9px;font-weight:400;color:#333;-webkit-text-stroke:0.15px #333;">2</span>
<span class="t" style="left:666.0px;top:441px;font-size:7.0px;line-height:9px;font-weight:400;color:#333;-webkit-text-stroke:0.15px #333;">3</span>
<span class="t" style="left:681.4px;top:441px;font-size:7.0px;line-height:9px;font-weight:400;color:#333;-webkit-text-stroke:0.15px #333;">4</span>
<span class="t" style="left:713.6px;top:441px;font-size:6.8px;line-height:9px;font-weight:700;color:#155847;transform:scaleX(0.937);">Next</span>
</div></div>
</body>
</html>
